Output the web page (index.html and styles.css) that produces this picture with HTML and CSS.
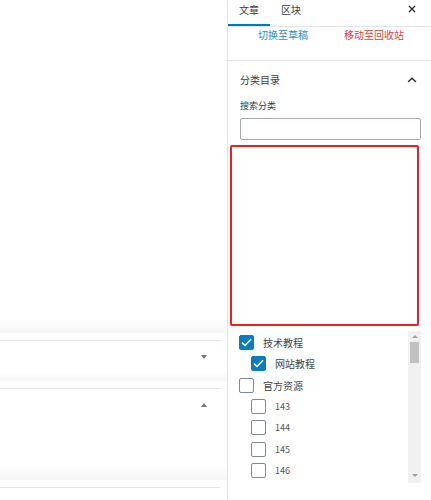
FILE: index.html
```html
<!DOCTYPE html>
<html lang="zh-CN">
<head>
<meta charset="utf-8">
<title>编辑文章</title>
<link rel="stylesheet" href="styles.css">
</head>
<body>
<div class="editor">
  <main class="content">
    <div class="canvas"></div>
    <div class="fade"></div>
    <div class="rule"></div>
    <section class="metabox">
      <div class="mb-head"><span class="tri tri-down"></span></div>
      <div class="fade short"></div>
    </section>
    <div class="rule"></div>
    <section class="metabox">
      <div class="mb-head"><span class="tri tri-up"></span></div>
      <div class="mb-body"></div>
      <div class="fade"></div>
    </section>
    <div class="rule"></div>
  </main>

  <aside class="sidebar">
    <div class="tabs">
      <button class="tab is-active">文章</button>
      <button class="tab">区块</button>
      <button class="close" aria-label="关闭">
        <svg width="8" height="8" viewBox="0 0 8 8"><path d="M1 1L7 7M7 1L1 7" stroke="#2a2a2a" stroke-width="1.3" fill="none"/></svg>
      </button>
    </div>

    <div class="actions">
      <a class="link link-draft">切换至草稿</a>
      <a class="link link-trash">移动至回收站</a>
    </div>

    <div class="panel">
      <div class="panel-head">
        <span class="panel-title">分类目录</span>
        <svg class="chevron" width="10" height="6" viewBox="0 0 10 6"><path d="M1 5L5 1.2L9 5" stroke="#2a2a2a" stroke-width="1.4" fill="none"/></svg>
      </div>
      <label class="search-label">搜索分类</label>
      <input class="search" type="text">
      <div class="highlight"></div>

      <div class="checklist">
        <ul class="cats">
          <li class="cat"><span class="box is-checked"><svg width="11" height="9" viewBox="0 0 11 9"><path d="M1 4.6L4 7.5L10 1.2" stroke="#fff" stroke-width="1.5" fill="none"/></svg></span><span class="cat-name">技术教程</span></li>
          <li class="cat child"><span class="box is-checked"><svg width="11" height="9" viewBox="0 0 11 9"><path d="M1 4.6L4 7.5L10 1.2" stroke="#fff" stroke-width="1.5" fill="none"/></svg></span><span class="cat-name">网站教程</span></li>
          <li class="cat"><span class="box"></span><span class="cat-name">官方资源</span></li>
          <li class="cat child"><span class="box"></span><span class="cat-name num">143</span></li>
          <li class="cat child"><span class="box"></span><span class="cat-name num">144</span></li>
          <li class="cat child"><span class="box"></span><span class="cat-name num">145</span></li>
          <li class="cat child"><span class="box"></span><span class="cat-name num">146</span></li>
        </ul>
        <div class="scrollbar">
          <span class="sb-arrow sb-up"></span>
          <span class="sb-thumb"></span>
          <span class="sb-space"></span>
          <span class="sb-arrow sb-down"></span>
        </div>
      </div>
    </div>
  </aside>
</div>
</body>
</html>
```

FILE: styles.css
```css
* { box-sizing: border-box; }

html, body {
  margin: 0;
  padding: 0;
  background: #fff;
}

body {
  font-family: "Noto Sans CJK SC", "Noto Sans", sans-serif;
  font-size: 10px;
  color: #444;
  width: 431px;
  height: 500px;
  overflow: hidden;
}

.editor {
  display: flex;
  height: 500px;
}

/* ---------- left content ---------- */
.content {
  width: 227px;
  flex: none;
  display: flex;
  flex-direction: column;
}

.canvas { height: 318px; }

.fade {
  height: 15px;
  margin-bottom: 7px;
  background: linear-gradient(to bottom, #ffffff, #f5f5f5);
}
.fade.short { height: 8px; }

.rule {
  width: 220px;
  height: 1px;
  background: #e2e4e7;
}

.metabox { display: flex; flex-direction: column; }

.mb-head {
  height: 32px;
  display: flex;
  align-items: center;
  justify-content: flex-end;
  padding-right: 20px;
}

.mb-body { height: 44px; }

.tri {
  width: 0;
  height: 0;
  border-left: 3px solid transparent;
  border-right: 3px solid transparent;
}
.tri-down { border-top: 4px solid #72777c; }
.tri-up { border-bottom: 4px solid #72777c; }

/* ---------- sidebar ---------- */
.sidebar {
  width: 204px;
  flex: none;
  border-left: 1px solid #e2e4e7;
  display: flex;
  flex-direction: column;
}

.tabs {
  display: flex;
  height: 27px;
  border-bottom: 1px solid #e2e4e7;
}

.tab {
  width: 42px;
  height: 26px;
  padding: 0 0 5px;
  border: 0;
  background: none;
  font: inherit;
  font-size: 10px;
  color: #3c3c3c;
  display: flex;
  align-items: center;
  justify-content: center;
  border-bottom: 2px solid transparent;
}
.tab.is-active { border-bottom-color: #007cba; }

.close {
  margin-left: auto;
  margin-right: 6px;
  width: 26px;
  height: 26px;
  padding: 0 0 8px;
  border: 0;
  background: none;
  display: flex;
  align-items: center;
  justify-content: center;
}

.actions {
  display: flex;
  gap: 36px;
  padding: 1px 0 18px 30px;
  border-bottom: 1px solid #e2e4e7;
  line-height: 14px;
}
.link { font-size: 10px; }
.link-draft { color: #2b8ccc; }
.link-trash { color: #e03c3c; }

.panel {
  display: flex;
  flex-direction: column;
  padding: 0 10px 0 12px;
}

.panel-head {
  height: 37px;
  display: flex;
  align-items: center;
  justify-content: space-between;
  padding-right: 4px;
}
.panel-title { font-size: 10px; color: #3c3c3c; }

.search-label {
  margin-top: 2px;
  font-size: 9px;
  line-height: 12px;
  color: #3c3c3c;
}

.search {
  margin-top: 6px;
  width: 181px;
  height: 22px;
  border: 1px solid #a2a8ad;
  border-radius: 2px;
  background: #fff;
  padding: 0 6px;
}

.highlight {
  margin: 5px 0 0 -10px;
  width: 189px;
  height: 181px;
  border: 2px solid #f51d1d;
  border-radius: 2px;
}

.checklist {
  margin-top: 5px;
  margin-left: -1px;
  height: 152px;
  display: flex;
}

.cats {
  flex: 1;
  list-style: none;
  margin: 0;
  padding: 4px 0 0;
}

.cat {
  height: 21.33px;
  display: flex;
  align-items: flex-start;
  gap: 9px;
}
.cat.child { padding-left: 12px; }

.box {
  width: 15px;
  height: 15px;
  flex: none;
  border: 1px solid #7e8993;
  border-radius: 2px;
  background: #fff;
  display: flex;
  align-items: center;
  justify-content: center;
}
.box.is-checked {
  background: #0a7dc1;
  border-color: #0a7dc1;
}

.cat-name {
  font-size: 10px;
  line-height: 15px;
  color: #444;
}
.cat-name.num { font-size: 9px; color: #555; }

.scrollbar {
  width: 13px;
  flex: none;
  background: #f1f1f1;
  display: flex;
  flex-direction: column;
  align-items: center;
}

.sb-arrow {
  width: 0;
  height: 0;
  border-left: 3px solid transparent;
  border-right: 3px solid transparent;
}
.sb-up { margin-top: 4px; border-bottom: 3px solid #a3a3a3; }
.sb-down { margin-bottom: 6px; border-top: 3px solid #a3a3a3; }

.sb-thumb {
  margin-top: 4px;
  width: 9px;
  height: 21px;
  background: #c1c1c1;
}
.sb-space { flex: 1; }
```
